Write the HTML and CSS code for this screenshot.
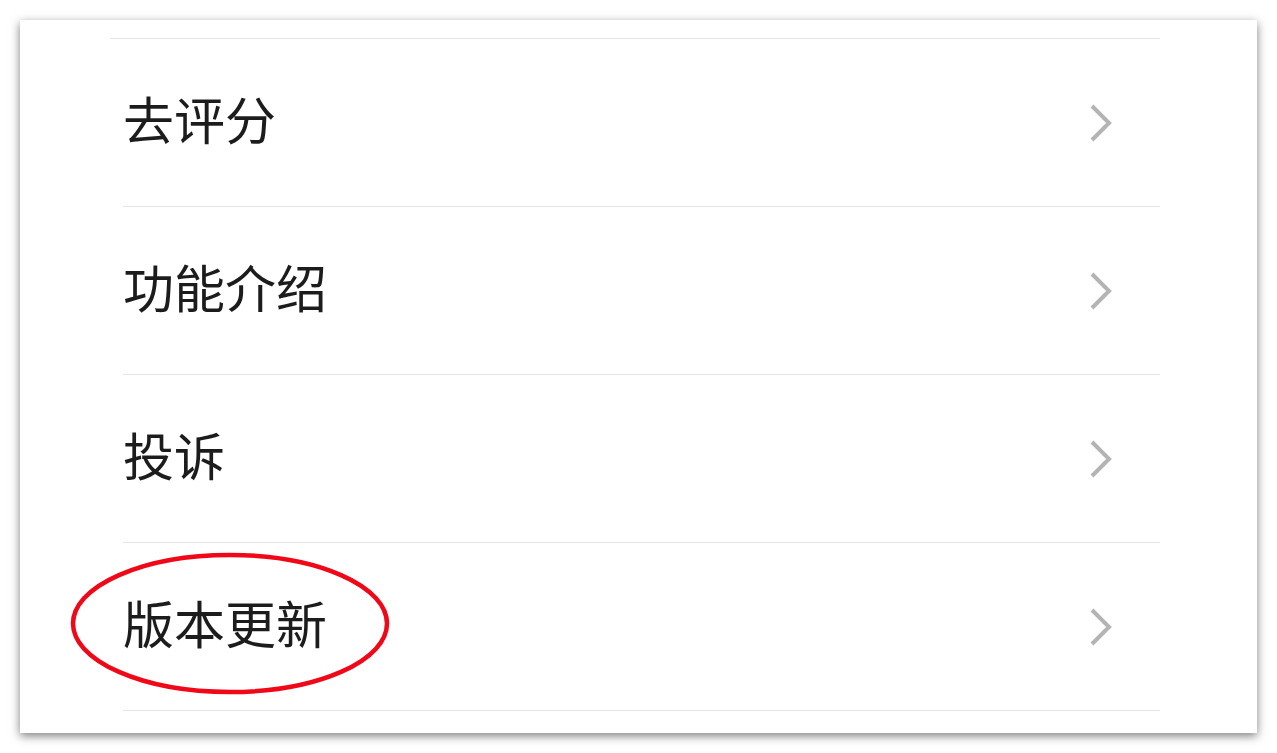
FILE: index.html
```html
<!DOCTYPE html>
<html lang="zh-CN">
<head>
<meta charset="utf-8">
<title>设置</title>
<link rel="stylesheet" href="styles.css">
</head>
<body>
<div class="card">
  <div class="top-line"></div>
  <ul class="menu">
    <li class="item"><span class="label">去评分</span><svg class="chev" viewBox="0 0 26 40" width="26" height="40"><path d="M4 3 L21 20 L4 37"/></svg></li>
    <li class="item"><span class="label">功能介绍</span><svg class="chev" viewBox="0 0 26 40" width="26" height="40"><path d="M4 3 L21 20 L4 37"/></svg></li>
    <li class="item"><span class="label">投诉</span><svg class="chev" viewBox="0 0 26 40" width="26" height="40"><path d="M4 3 L21 20 L4 37"/></svg></li>
    <li class="item"><span class="label">版本更新</span><svg class="chev" viewBox="0 0 26 40" width="26" height="40"><path d="M4 3 L21 20 L4 37"/></svg></li>
  </ul>
  <svg class="mark" viewBox="0 0 320 143" width="320" height="143"><ellipse cx="160" cy="71.5" rx="157" ry="68.5"/></svg>
</div>
</body>
</html>
```

FILE: styles.css
```css
html, body {
  margin: 0;
  padding: 0;
  background: #ffffff;
}

body {
  font-family: "Noto Sans CJK SC", "Noto Sans", sans-serif;
  padding-top: 20px;
  height: 753px;
  box-sizing: border-box;
}

.card {
  position: relative;
  margin: 0 0 0 20px;
  width: 1237px;
  height: 713px;
  box-sizing: border-box;
  padding-top: 18px;
  background: #ffffff;
  box-shadow: 0 3px 9px rgba(0, 0, 0, 0.5);
}

.top-line {
  height: 1px;
  margin: 0 97px 0 90px;
  background: #e6e6e6;
}

.menu {
  list-style: none;
  margin: 0 97px 0 103px;
  padding: 0;
}

.item {
  display: flex;
  align-items: center;
  justify-content: space-between;
  height: 167px;
  border-bottom: 1px solid #e6e6e6;
  padding-right: 46px;
}

.label {
  font-size: 51px;
  line-height: 1;
  color: #1c1c1c;
  margin-bottom: 9px;
}

.chev {
  display: block;
}

.chev path {
  fill: none;
  stroke: #b4b4b4;
  stroke-width: 4;
}

.mark {
  position: absolute;
  left: 50px;
  top: 532px;
}

.mark ellipse {
  fill: none;
  stroke: #f00818;
  stroke-width: 4.5;
}
```
